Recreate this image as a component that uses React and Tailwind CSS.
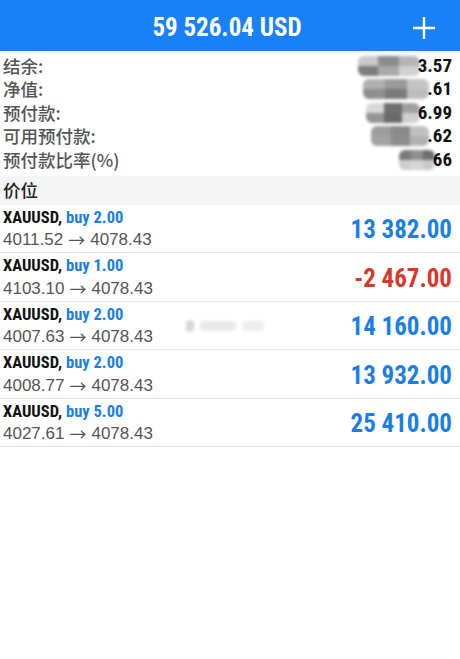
import React from "react";

const narrow = { fontFamily: '"Liberation Sans Narrow", "Roboto Condensed", "Liberation Sans", sans-serif' };
const cjk = { fontFamily: '"Noto Sans CJK SC", "Liberation Sans", sans-serif' };

const summary = [
  { label: "结余:", value: "3.57", tiles: ["#c9c9c9", "#8c8c8c", "#b5b5b5", "#7d7d7d", "#a9a9a9", "#d0d0d0"], w: "w-[62px]" },
  { label: "净值:", value: ".61", tiles: ["#b0b0b0", "#9a9a9a", "#c4c4c4", "#8f8f8f", "#7a7a7a", "#bdbdbd"], w: "w-[66px]" },
  { label: "预付款:", value: "6.99", tiles: ["#d8d8d8", "#6f6f6f", "#a0a0a0", "#959595", "#6a6a6a", "#cfcfcf"], w: "w-[54px]" },
  { label: "可用预付款:", value: ".62", tiles: ["#9d9d9d", "#8a8a8a", "#c0c0c0", "#a3a3a3", "#8e8e8e", "#b2b2b2"], w: "w-[58px]" },
  { label: "预付款比率(%)", value: "66", tiles: ["#7b7b7b", "#8f8f8f", "#6e6e6e", "#cfcfcf", "#d6d6d6", "#c9c9c9"], w: "w-[36px]" },
];

const trades = [
  { lot: "buy 2.00", open: "4011.52", close: "4078.43", profit: "13 382.00", loss: false },
  { lot: "buy 1.00", open: "4103.10", close: "4078.43", profit: "-2 467.00", loss: true },
  { lot: "buy 2.00", open: "4007.63", close: "4078.43", profit: "14 160.00", loss: false, mark: true },
  { lot: "buy 2.00", open: "4008.77", close: "4078.43", profit: "13 932.00", loss: false },
  { lot: "buy 5.00", open: "4027.61", close: "4078.43", profit: "25 410.00", loss: false },
];

const Mosaic = ({ tiles, w }) => (
  <div className={`${w} h-[20px] grid grid-cols-3 blur-[1.5px] rounded-[6px] overflow-hidden mr-[-2px]`}>
    {tiles.map((c, i) => (
      <div key={i} style={{ backgroundColor: c }} />
    ))}
  </div>
);

const App = () => {
  return (
    <div className="w-[460px] h-[659px] bg-white overflow-hidden" style={{ fontFamily: '"Liberation Sans", "Noto Sans CJK SC", sans-serif' }}>
      {/* header */}
      <header className="h-[51px] bg-[#1a80f6] flex items-center justify-center relative">
        <h1 className="text-white text-[25px] font-bold mt-[4px] ml-[-6px]" style={narrow}>
          59 526.04 USD
        </h1>
        <button className="absolute right-[22px] top-[14px] text-white">
          <svg width="28" height="28" viewBox="0 0 28 28">
            <path d="M14 3v22M3 14h22" stroke="white" strokeWidth="2.4" fill="none" />
          </svg>
        </button>
      </header>

      {/* account summary */}
      <div className="pt-[3px] pb-[4px]">
        {summary.map((row) => (
          <div key={row.label} className="h-[23.5px] flex items-center justify-between pl-[3px] pr-[8px]">
            <span className="text-[17.5px] text-[#555] font-medium" style={cjk}>
              {row.label}
            </span>
            <div className="flex items-center">
              <Mosaic tiles={row.tiles} w={row.w} />
              <span className="text-[19px] font-bold text-[#111] relative" style={narrow}>
                {row.value}
              </span>
            </div>
          </div>
        ))}
      </div>

      {/* positions header */}
      <div className="h-[29px] bg-[#f5f5f5] flex items-center pl-[3px]">
        <span className="text-[17.5px] text-[#222] font-medium" style={cjk}>
          价位
        </span>
      </div>

      {/* positions */}
      <ul>
        {trades.map((t, i) => (
          <li key={i} className="h-[48.5px] border-b border-[#e6e6e6] flex items-center justify-between pl-[3px] pr-[8px] relative">
            <div className="flex flex-col leading-none">
              <div className="text-[16.5px] font-bold h-[22px] flex items-center mt-[1px]" style={narrow}>
                <span className="text-[#111]">XAUUSD,</span>
                <span className="text-[#1a7ee6] ml-[4px]">{t.lot}</span>
              </div>
              <div className="text-[17px] text-[#555] h-[22px] flex items-center">
                {t.open}
                <span className="mx-[5px]" style={cjk}>→</span>
                {t.close}
              </div>
            </div>
            <span
              className={`text-[25px] font-bold mt-[3px] ${t.loss ? "text-[#d8382b]" : "text-[#1a7ee6]"}`}
              style={narrow}
            >
              {t.profit}
            </span>
            {t.mark && (
              <div className="absolute left-[186px] top-[18px] flex items-center gap-[6px] blur-[1.5px] opacity-60">
                <div className="w-[8px] h-[12px] bg-[#bdbdbd] rounded-sm" />
                <div className="w-[36px] h-[10px] bg-[#dcdcdc] rounded-sm" />
                <div className="w-[22px] h-[10px] bg-[#e2e2e2] rounded-sm" />
              </div>
            )}
          </li>
        ))}
      </ul>
    </div>
  );
};

export default App;
